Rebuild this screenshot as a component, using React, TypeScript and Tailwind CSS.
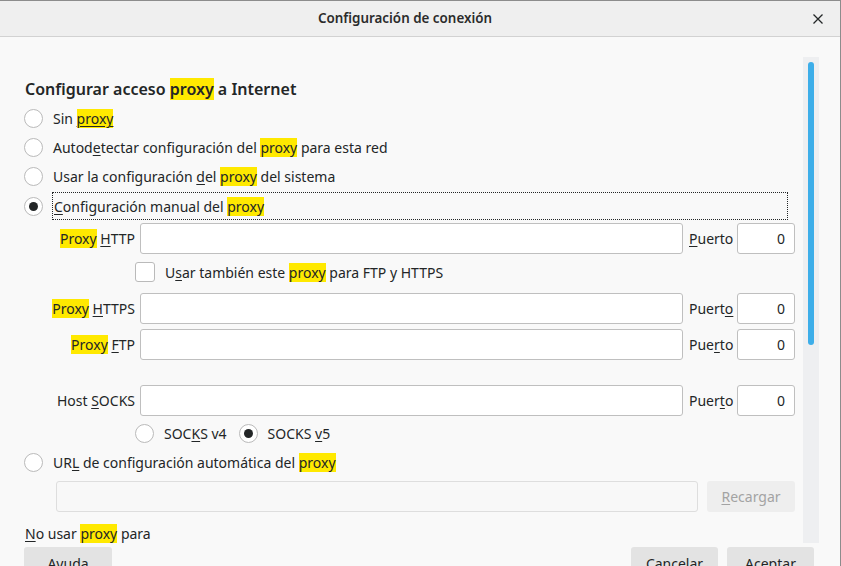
import React from "react";

const font = { fontFamily: "'Noto Sans', 'Open Sans', sans-serif" };

function Hl({ children }: { children: React.ReactNode }) {
  return <span className="bg-[#ffe900]">{children}</span>;
}

function U({ children }: { children: React.ReactNode }) {
  return <span className="underline underline-offset-[2px] decoration-1">{children}</span>;
}

function Radio({ checked = false }: { checked?: boolean }) {
  return (
    <span className="flex h-[19px] w-[19px] shrink-0 items-center justify-center rounded-full border border-[#bababa] bg-white">
      {checked && <span className="h-[9px] w-[9px] rounded-full bg-[#232627]" />}
    </span>
  );
}

function RadioRow({
  checked,
  children,
  className = "",
}: {
  checked?: boolean;
  children: React.ReactNode;
  className?: string;
}) {
  return (
    <div className={`flex items-center ${className}`}>
      <Radio checked={checked} />
      <span className="ml-[10px] whitespace-nowrap">{children}</span>
    </div>
  );
}

function ProxyRow({
  label,
  port,
  className = "",
}: {
  label: React.ReactNode;
  port: React.ReactNode;
  className?: string;
}) {
  return (
    <div className={`flex h-[31px] items-center ${className}`}>
      <div className="w-[111px] whitespace-nowrap text-right">{label}</div>
      <div className="ml-[5px] h-full w-[543px] rounded-[3px] border border-[#bfbfbf] bg-white" />
      <div className="ml-[6px] w-[45px] whitespace-nowrap">{port}</div>
      <div className="ml-[3px] flex h-full w-[58px] items-center justify-end rounded-[3px] border border-[#bfbfbf] bg-white pr-[9px]">
        0
      </div>
    </div>
  );
}

export default function App() {
  return (
    <div
      className="flex h-[566px] w-[841px] flex-col overflow-hidden border-r border-t border-[#8c8c8c] bg-[#f9f9f9] text-[14px] leading-[19px] text-[#232627]"
      style={font}
    >
      {/* Title bar */}
      <div className="relative flex h-[36px] shrink-0 items-center justify-center border-b border-[#d2d2d2] bg-[#efefef] pr-[30px]">
        <span className="text-[13.4px] font-semibold text-[#2b2b2b]">Configuración de conexión</span>
        <svg className="absolute right-[17px] top-[13px]" width="10" height="10" viewBox="0 0 10 10">
          <path d="M0.5 0.5 L9.5 9.5 M9.5 0.5 L0.5 9.5" stroke="#232627" strokeWidth="1.3" />
        </svg>
      </div>

      {/* Scroll area */}
      <div className="flex h-[506px] shrink-0 overflow-hidden">
        <div className="w-[803px] shrink-0 pl-[24px]">
          <div className="mt-[41px] h-[22px] pl-px text-[16px] font-semibold leading-[22px]">
            Configurar acceso <Hl>proxy</Hl> a Internet
          </div>

          <div className="mt-[4px]">
            <RadioRow className="h-[29px]">
              Sin <Hl><U>proxy</U></Hl>
            </RadioRow>
            <RadioRow className="h-[29px]">
              Autod<U>e</U>tectar configuración del <Hl>proxy</Hl> para esta red
            </RadioRow>
            <RadioRow className="h-[29px]">
              Usar la configuración <U>d</U>el <Hl>proxy</Hl> del sistema
            </RadioRow>
            <div className="mt-[1px] flex h-[28px] items-center">
              <Radio checked />
              <div className="ml-[9px] flex h-full w-[736px] items-center border border-dotted border-[#232627] pl-px">
                <span className="whitespace-pre">
                  <U>C</U>onfiguración manual del <Hl>proxy</Hl>
                </span>
              </div>
            </div>
          </div>

          <ProxyRow
            className="mt-[3px]"
            label={
              <>
                <Hl>Proxy</Hl> <U>H</U>TTP
              </>
            }
            port={
              <>
                <U>P</U>uerto
              </>
            }
          />

          <div className="mt-[8px] flex h-[20px] items-center pl-[111px]">
            <span className="h-[20px] w-[20px] rounded-[3px] border border-[#bababa] bg-white" />
            <span className="ml-[10px]">
              U<U>s</U>ar también este <Hl>proxy</Hl> para FTP y HTTPS
            </span>
          </div>

          <ProxyRow
            className="mt-[11px]"
            label={
              <>
                <Hl>Proxy</Hl> <U>H</U>TTPS
              </>
            }
            port={
              <>
                Puert<U>o</U>
              </>
            }
          />
          <ProxyRow
            className="mt-[5px]"
            label={
              <>
                <Hl>Proxy</Hl> <U>F</U>TP
              </>
            }
            port={
              <>
                Pue<U>r</U>to
              </>
            }
          />
          <ProxyRow
            className="mt-[25px]"
            label={
              <>
                Host <U>S</U>OCKS
              </>
            }
            port={
              <>
                Puer<U>t</U>o
              </>
            }
          />

          <div className="mt-[7px] flex h-[20px] items-center pl-[111px]">
            <RadioRow>
              SOC<U>K</U>S v4
            </RadioRow>
            <RadioRow className="ml-[12px]" checked>
              SOCKS <U>v</U>5
            </RadioRow>
          </div>

          <RadioRow className="mt-[9px] h-[20px]">
            UR<U>L</U> de configuración automática del <Hl>proxy</Hl>
          </RadioRow>

          <div className="mt-[9px] flex h-[31px] pl-[32px]">
            <div className="w-[642px] rounded-[3px] border border-[#dedede] bg-[#f8f8f8]" />
            <div className="ml-[9px] flex w-[88px] items-center justify-center rounded-[3px] bg-[#eeeeee] text-[#a3a3a3]">
              <U>R</U>ecargar
            </div>
          </div>

          <div className="mt-[12px] h-[20px] pl-px">
            <U>N</U>o usar <Hl>proxy</Hl> para
          </div>
        </div>

        {/* Scrollbar */}
        <div className="mt-[20px] h-[486px] w-[16px] shrink-0 bg-[#eeeff1] px-[5px] pt-[5px]">
          <div className="h-[283px] w-[6px] rounded-full bg-[#3daee9]" />
        </div>
      </div>

      {/* Dialog buttons */}
      <div className="mt-[4px] flex pl-[24px]">
        <div className="flex h-[32px] w-[88px] items-center justify-center rounded-[3px] bg-[#e3e3e3]">Ayuda</div>
        <div className="ml-[519px] flex h-[32px] w-[87px] items-center justify-center rounded-[3px] bg-[#e3e3e3]">
          Cancelar
        </div>
        <div className="ml-[9px] flex h-[32px] w-[87px] items-center justify-center rounded-[3px] bg-[#e3e3e3]">
          Aceptar
        </div>
      </div>
    </div>
  );
}
